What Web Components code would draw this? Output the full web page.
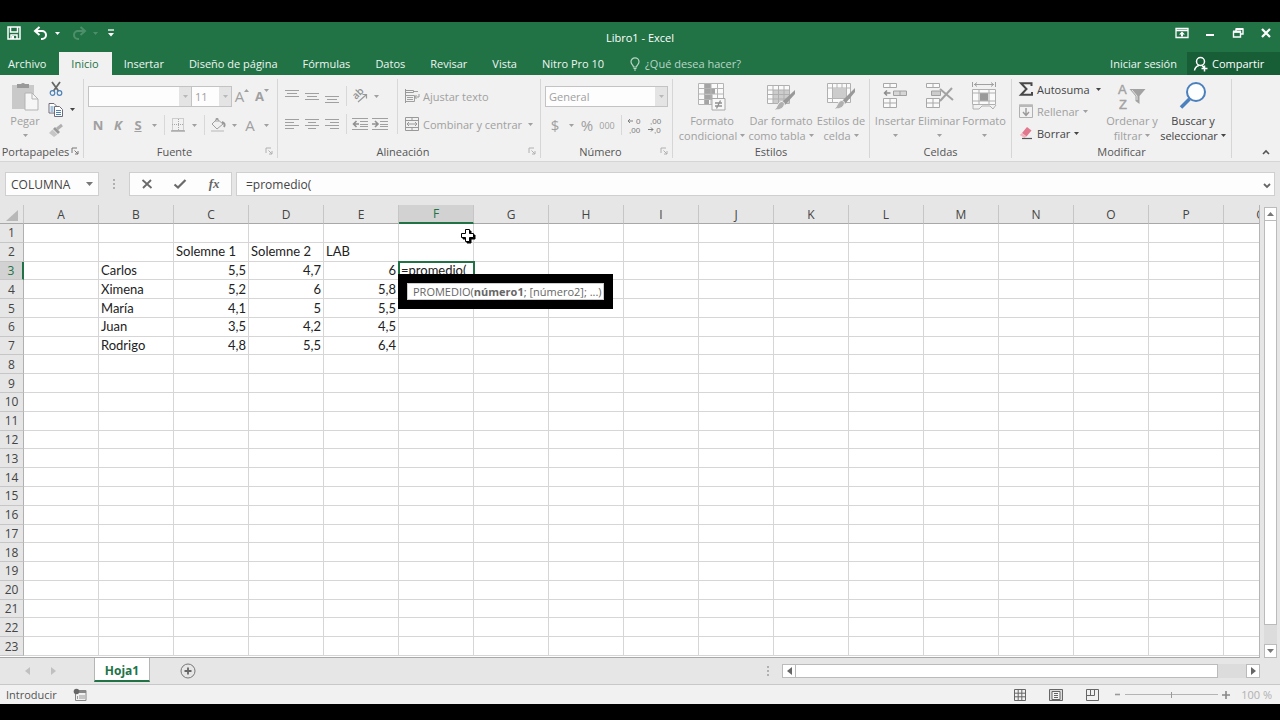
<!DOCTYPE html>
<html lang="es">
<head>
<meta charset="utf-8">
<meta name="viewport" content="width=device-width, initial-scale=1">
<title>Libro1 - Excel</title>
<style>
  html, body { margin: 0; height: 100%; background: #000; }
  body { font: 11px/15px "Open Sans", "Noto Sans", sans-serif; color: #444; }
</style>
</head>
<body>
<xl-app></xl-app>

<script>
const ICONS = {
  save: [14, 14, '<path d="M1 1h12v12H1z M3.500 1v5h7V1 M4 13V9h6v4" fill="none" stroke="#fff" stroke-width="1.500"/><path d="M5 10h2v3H5z" fill="#fff"/>'],
  undo: [16, 14, '<path d="M2.500 5H9a4 4 0 0 1 0 8H8" fill="none" stroke="#fff" stroke-width="2"/><path d="M6.500 1L2 5l4.500 4" fill="none" stroke="#fff" stroke-width="2"/>'],
  redo: [16, 14, '<path d="M13.500 5H7a4 4 0 0 0 0 8H8" fill="none" stroke="#4d8f6a" stroke-width="2"/><path d="M9.500 1L14 5l-4.500 4" fill="none" stroke="#4d8f6a" stroke-width="2"/>'],
  customize: [8, 8, '<path d="M1 1h6" stroke="#fff" stroke-width="1.300"/><path d="M1 4h6L4 7.500z" fill="#fff"/>'],
  ribbonOpts: [14, 12, '<path d="M1 1.500h12v9H1z M1 3.500h12" fill="none" stroke="#fff" stroke-width="1.300"/><path d="M7 4.500L10 7.500H8V9.500H6V7.500H4z" fill="#fff"/>'],
  minimize: [14, 12, '<path d="M3 7h8v2H3z" fill="#fff"/>'],
  restore: [14, 12, '<path d="M5 4V2h7v5h-2 M2.500 5h7v5h-7z" fill="none" stroke="#fff" stroke-width="1.400"/><path d="M2 4.500h8 M5 2h7" stroke="#fff" stroke-width="2"/>'],
  close: [14, 12, '<path d="M3 2l8 8 M11 2l-8 8" stroke="#fff" stroke-width="2.200"/>'],
  bulb: [12, 14, '<path d="M4.500 10C4.500 8 2 7.500 2 4.800a4 4 0 0 1 8 0C10 7.500 7.500 8 7.500 10z M4.500 11.500h3 M5 13h2" fill="none" stroke="#b9d6c6" stroke-width="1.200"/>'],
  share: [16, 16, '<circle cx="7.500" cy="5.500" r="4" fill="none" stroke="#fff" stroke-width="1.500"/><path d="M1.500 14.500C2 11.500 4 10 6 9.500 M9 9.500l2 2 M11.500 9.500v6 M8.500 12.500h6" fill="none" stroke="#fff" stroke-width="1.500"/>'],
  caret: [5, 3, '<path d="M0 0h5L2.500 3z" fill="currentColor"/>'],
  markUp: [5, 14, '<path d="M0 3h5L2.500 0z" fill="currentColor"/>'],
  markDown: [5, 14, '<path d="M0 0h5L2.500 3z" fill="currentColor"/>'],
  launcher: [8, 8, '<path d="M1 6V1h5" fill="none" stroke="currentColor"/><path d="M3.500 3.500L7 7 M7 4v3H4" fill="none" stroke="currentColor"/>'],
  chevUp: [8, 6, '<path d="M1 5l3-3 3 3" fill="none" stroke="#555" stroke-width="1.600"/>'],
  chevDown: [8, 6, '<path d="M1 1l3 3 3-3" fill="none" stroke="#666" stroke-width="1.800"/>'],
  paste: [28, 30, '<path d="M1 4h22v24H1z" fill="#c9c9c9"/><path d="M6 3h4a2.500 2.500 0 0 1 4 0h4v4H6z" fill="#999"/><path d="M14 12h7l6 6v11H14z" fill="#f6f6f6" stroke="#b3b3b3"/><path d="M21 12v6h6" fill="none" stroke="#b3b3b3"/>'],
  cut: [14, 14, '<path d="M3 0l6.500 9 M11 0L4.500 9" stroke="#666" stroke-width="1.800"/><circle cx="3.500" cy="11" r="2.300" fill="none" stroke="#4c82b8" stroke-width="1.200"/><circle cx="10.500" cy="11" r="2.300" fill="none" stroke="#4c82b8" stroke-width="1.200"/>'],
  copy: [16, 14, '<path d="M1 .500h5l2 2V10H1z" fill="#fff" stroke="#6c6c78"/><path d="M2.500 4h3 M2.500 6h3 M2.500 8h3" stroke="#4c82b8"/><path d="M6.500 3.500h5l3 3v7h-8z" fill="#fff" stroke="#6c6c78"/><path d="M8 7.500h5 M8 9.500h5 M8 11.500h5" stroke="#4c82b8"/>'],
  brush: [16, 14, '<path d="M14 1l-5 4" stroke="#b0b0b0" stroke-width="3"/><path d="M7 3l5 5-2 2-5-5z" fill="#999"/><path d="M4.500 5.500l5 5L6 13 1 9z" fill="#c6c6c6"/>'],
  borders: [14, 14, '<path d="M1.500 .500h11v12h-11z M7.500 1v12 M1 6.500h12" fill="none" stroke="#a8a8a8" stroke-dasharray="1 1"/><path d="M0 13h14" stroke="#9a9a9a" stroke-width="1.200"/>'],
  fill: [16, 16, '<path d="M7 2l6 5-6 5-5-5z M6 5V1.500h2V5" fill="none" stroke="#a0a0a0"/><path d="M12 5c3 1 3 3 2 5" fill="none" stroke="#999" stroke-width="2"/><path d="M1 13h13v2H1z" fill="#d4d4d4"/>'],
  alTop: [14, 14, '<path d="M0 1.500h14 M2 4.500h10 M0 7.500h14" stroke="#a0a0a0"/>'],
  alMid: [14, 14, '<path d="M0 4.500h14 M2 7.500h10 M0 10.500h14" stroke="#a0a0a0"/>'],
  alBot: [14, 14, '<path d="M0 7.500h14 M2 10.500h10 M0 13.500h14" stroke="#a0a0a0"/>'],
  alLeft: [14, 12, '<path d="M0 1.500h14 M0 4.500h9 M0 7.500h14 M0 10.500h9" stroke="#a0a0a0"/>'],
  alCenter: [14, 12, '<path d="M0 1.500h14 M3 4.500h8 M0 7.500h14 M3 10.500h8" stroke="#a0a0a0"/>'],
  alRight: [14, 12, '<path d="M0 1.500h14 M5 4.500h9 M0 7.500h14 M5 10.500h9" stroke="#a0a0a0"/>'],
  outdent: [16, 12, '<path d="M0 .500h16 M8 3.500h8 M8 6.500h8 M8 8.500h8 M0 11.500h16" stroke="#a0a0a0"/><path d="M7 6H2 M4.500 3L1.500 6l3 3" fill="none" stroke="#909090" stroke-width="1.600"/>'],
  indent: [16, 12, '<path d="M0 .500h16 M8 3.500h8 M8 6.500h8 M8 8.500h8 M0 11.500h16" stroke="#a0a0a0"/><path d="M0 6h5 M3 3l3 3-3 3" fill="none" stroke="#909090" stroke-width="1.600"/>'],
  orient: [16, 14, '<text x="0" y="0" transform="translate(4 11) rotate(-45)" font-family="Open Sans" font-weight="600" font-size="10" fill="#909090">ab</text><path d="M6 13l8-7 M10.500 5.500H14.500V9.500" fill="none" stroke="#999" stroke-width="1.200"/>'],
  wrap: [16, 14, '<path d="M1.500 0v14 M1.500 1.500h8v2h-8" fill="none" stroke="#999"/><path d="M1.500 6.500h9v6h-9 M3 8.500h6 M3 10.500h6 M10 2.500h4" fill="none" stroke="#a0a0a0"/><path d="M15 5v3h-4 M12.500 6l-2 2 2 2" fill="none" stroke="#999"/>'],
  merge: [14, 14, '<path d="M.500 .500h13v13H.500z M.500 3.500h13 M.500 10.500h13 M7 .500v3 M7 10.500v3" fill="none" stroke="#999"/><path d="M2 7h10 M4 5L2 7l2 2 M10 5l2 2-2 2" fill="none" stroke="#999"/>'],
  decMore: [14, 16, '<path d="M0 4h5 M2 2l-2 2 2 2" fill="none" stroke="#808080"/><text x="8" y="7" font-family="Liberation Sans" font-size="8" fill="#7c7c7c">0</text><text x="1" y="16" font-family="Liberation Sans" font-size="8" fill="#7c7c7c">,00</text>'],
  decLess: [14, 16, '<text x="2" y="7" font-family="Liberation Sans" font-size="8" fill="#7c7c7c">,00</text><path d="M0 12.500h5 M3 10.500l2 2-2 2" fill="none" stroke="#808080"/><text x="6" y="16" font-family="Liberation Sans" font-size="8" fill="#7c7c7c">,0</text>'],
  condFmt: [30, 30, '<path d="M1 2h26v22H1z" fill="#fafafa"/><path d="M7.500 2H14v5.500H7.500z M7.500 8H18v5H7.500z M7.500 13.500h8V18h-8z M7.500 18.500H12V24H7.500z" fill="#a4a4a4"/><path d="M1.500 2.500h25v21h-25z M7.500 2.500v21 M14 2.500v21 M20.500 2.500v21 M1.500 7.500h25 M1.500 13h25 M1.500 18.500h25" fill="none" stroke="#b4b4b4"/><path d="M15 17.500h13v11.500H15z" fill="#f8f8f8" stroke="#a8a8a8"/><path d="M18 22h7 M18 25h7 M23.500 19.500l-4 8" stroke="#909090" stroke-width="1.300" fill="none"/>'],
  table: [30, 30, '<path d="M1.500 4.500h22v18h-22z" fill="#fafafa"/><path d="M7 9h16v13H7z" fill="#ccc"/><path d="M1.500 4.500h22v18h-22z M7 4.500v18 M12.500 4.500v18 M18 4.500v18 M1.500 9h22 M1.500 13.500h22 M1.500 18h22" fill="none" stroke="#b0b0b0"/><path d="M29 9v4L19 24l-3-3z" fill="#999"/><path d="M15 20.500c3 0 4 2 3 4-1.500 4-6 4.500-10 4.500 3-1 3-7 7-8.500z" fill="#b0b0b0" stroke="#f1f1f1"/>'],
  cellStyle: [30, 30, '<path d="M1.500 2.500h23v19h-23z" fill="#fafafa" stroke="#b0b0b0"/><path d="M7 7.500h13v10H7z" fill="#ccc"/><path d="M6.500 2.500v19 M20.500 2.500v19 M1.500 7h23 M1.500 17.500h23 M11 2.500V7 M16 2.500V7" fill="none" stroke="#b4b4b4"/><path d="M29 7v4L19 23l-3-3z" fill="#999"/><path d="M15 19.500c3 0 4 2 3 4-1.500 4-6 4.500-10 4.500 3-1 3-7 7-8.500z" fill="#b0b0b0" stroke="#f1f1f1"/>'],
  insert: [26, 30, '<path d="M1.500 2.500h13v4h-13z M8 2.500v4 M1.500 17.500h13v9h-13z M8 17.500v9 M1.500 22h13" fill="#fafafa" stroke="#a8a8a8"/><path d="M11.500 10h13v4.500h-13z" fill="#d6d6d6" stroke="#a0a0a0"/><path d="M18 10v4.500" stroke="#a0a0a0"/><path d="M8.500 12H2.500 M5 9.500L2.500 12 5 14.500" fill="none" stroke="#8c8c8c" stroke-width="1.500"/>'],
  remove: [28, 30, '<path d="M1.500 2.500h13v4h-13z M8 2.500v4 M1.500 17.500h13v9h-13z M8 17.500v9 M1.500 22h13" fill="#fafafa" stroke="#a8a8a8"/><path d="M6.500 10h9v4.500h-9z" fill="#ccc" stroke="#a0a0a0"/><path d="M15 8l13 11 M27 7L15 20" stroke="#a2a2a2" stroke-width="2"/>'],
  format: [28, 30, '<path d="M2.500 1v5 M25.500 1v5 M4 3.500h20 M7 1.500L4.500 3.500 7 5.500 M21 1.500l2.500 2L21 5.500" fill="none" stroke="#a0a0a0"/><path d="M2.500 8.500h23v15h-23z" fill="#fafafa"/><path d="M10 12h8v8h-8z" fill="#999"/><path d="M2.500 8.500h23v15h-23z M9 8.500v15 M19 8.500v15 M2.500 12h23 M2.500 20h23" fill="none" stroke="#b0b0b0"/><path d="M3 24v4h6l3-3h8l3 3 3-4" fill="none" stroke="#b0b0b0"/>'],
  sigma: [14, 14, '<path d="M12.500 4V1.200H2L7.500 7 2 12.800h11V10" fill="none" stroke="#484848" stroke-width="2"/>'],
  fillDown: [14, 14, '<path d="M.500 1h13v12.500H.500z" fill="none" stroke="#b0b0b0"/><path d="M0 .500h14v2.500H0z" fill="#b8b8b8"/><path d="M7 4v7 M4 8l3 3.500L10 8" fill="none" stroke="#999" stroke-width="1.400"/>'],
  erase: [14, 14, '<path d="M8 1l4.500 3.500-5 6L3 7z" fill="#e2788d"/><path d="M3 7l4.500 3.500L5.500 12 .800 9z" fill="#f2b3bf"/><path d="M3 12.500h10" stroke="#555" stroke-width="1.200"/>'],
  sort: [28, 30, '<text x="0" y="13" font-family="Liberation Sans" font-size="13" fill="#a2a2a2" stroke="#a2a2a2" stroke-width=".4">A</text><text x="1" y="28" font-family="Liberation Sans" font-size="13" fill="#a2a2a2" stroke="#a2a2a2" stroke-width=".4">Z</text><path d="M11.500 8h16l-6 7v8l-4-3v-5z" fill="#a2a2a2"/><path d="M14 9l5 6v4" fill="none" stroke="#e4e4e4"/>'],
  find: [28, 30, '<circle cx="17" cy="11" r="9" fill="#fdfeff" stroke="#4a80bd" stroke-width="2"/><path d="M10.500 18L2 26.500" stroke="#4a80bd" stroke-width="3.500"/>'],
  cancel: [12, 10, '<path d="M1.500 1l9 8 M10 1L2 9" stroke="#6a6a6a" stroke-width="1.800"/>'],
  ok: [14, 10, '<path d="M1.500 5.500l3.500 3L12.500 1" fill="none" stroke="#6a6a6a" stroke-width="2.200"/>'],
  left: [5, 8, '<path d="M5 0v8L0 4z" fill="currentColor"/>'],
  right: [5, 8, '<path d="M0 0v8l5-4z" fill="currentColor"/>'],
  up: [7, 4, '<path d="M0 4h7L3.500 0z" fill="currentColor"/>'],
  down: [7, 4, '<path d="M0 0h7L3.500 4z" fill="currentColor"/>'],
  plusRound: [16, 16, '<circle cx="8" cy="8" r="7" fill="none" stroke="#777"/><path d="M8 4.500v7 M4.500 8h7" stroke="#666" stroke-width="1.800"/>'],
  macro: [14, 14, '<path d="M6 2.500h7v10H2.500V6" fill="none" stroke="#888"/><path d="M6 2h7v3H6z" fill="#888"/><circle cx="3.500" cy="3.500" r="2.800" fill="#666"/><path d="M4.500 8v3 M7 7v4 M9 7v4 M11 7v4" stroke="#999"/>'],
  vNormal: [12, 12, '<path d="M.500 .500h11v11H.500z M4.200 0v12 M7.800 0v12 M0 4.200h12 M0 7.800h12" fill="none" stroke="#666"/>'],
  vPage: [14, 12, '<path d="M.500 .500h13v11H.500z" fill="#ddd" stroke="#666"/><path d="M3 2.500h8v8H3z" fill="#f5f5f5" stroke="#666"/><path d="M5 4.500h4 M5 6.500h4 M5 8.500h4" stroke="#666"/>'],
  vBreak: [13, 12, '<path d="M.500 .500h12v11H.500z M4.500 .500v6 M8.500 .500v6h-8" fill="none" stroke="#666"/>'],
  minus: [7, 7, '<path d="M1 3.500h5" stroke="#999" stroke-width="1.600"/>'],
  plus: [8, 8, '<path d="M0 4h8 M4 0v8" stroke="#888" stroke-width="1.600"/>'],
  corner: [12, 11, '<path d="M12 0v11H0z" fill="#b8b8b8"/>'],
  cross: [16, 16, '<path d="M6 2h4v4h4v4h-4v4H6v-4H2V6h4z" fill="#000" stroke="#000" stroke-width="1" transform="translate(1 1)"/><path d="M5.500 1.500h4v4h4v4h-4v4h-4v-4h-4v-4h4z" fill="#fff" stroke="#000"/>'],
  dots: [2, 10, '<path d="M0 0h2v2H0z M0 4h2v2H0z M0 8h2v2H0z" fill="#b0b0b0"/>']
};

class XlElement extends HTMLElement {
  connectedCallback() {
    if (this.shadowRoot) return;
    this.attachShadow({ mode: 'open' }).innerHTML =
      `<style>*{box-sizing:border-box} button{font:inherit;color:inherit;background:none;border:0;padding:0;margin:0}
       ${this.styles()}</style>${this.markup()}`;
  }
  styles() { return ''; }
  markup() { return ''; }
}
const icon = name => `<xl-icon name="${name}"></xl-icon>`;

customElements.define('xl-icon', class extends XlElement {
  styles() { return ':host{display:inline-flex;flex:none} svg{display:block;overflow:visible}'; }
  markup() {
    const [w, h, body] = ICONS[this.getAttribute('name')];
    return `<svg width="${w}" height="${h}" viewBox="0 0 ${w} ${h}" aria-hidden="true">${body}</svg>`;
  }
});

/* Small ribbon button: icon or glyph in the slot, optional text and caret. */
customElements.define('xl-tool', class extends XlElement {
  styles() { return `
    :host{display:flex;color:#a0a0a0}
    :host([active]){color:#444}
    button{display:flex;align-items:center;height:var(--tool-h,20px)}
    .face{display:flex;justify-content:center;align-items:center;width:20px;white-space:nowrap}
    .caret{display:flex;justify-content:center;width:12px}
    .text{white-space:nowrap;padding-left:1px}
    :host([spread]),:host([spread]) button{flex:1}
    :host([spread]) .text{flex:1;text-align:left}`; }
  markup() {
    const text = this.getAttribute('text');
    return `<button type="button" aria-label="${text || this.getAttribute('label')}">
      <span class="face"><slot></slot></span>${text ? `<span class="text">${text}</span>` : ''}
      ${this.hasAttribute('menu') ? `<span class="caret">${icon('caret')}</span>` : ''}</button>`;
  }
});

/* Large ribbon button: picture above one or two lines of text. */
customElements.define('xl-big', class extends XlElement {
  styles() { return `
    :host{display:block;flex:none;color:#a0a0a0}
    :host([active]){color:#444}
    button{display:flex;flex-direction:column;align-items:center;width:100%;white-space:nowrap}
    .pic{display:flex;align-items:center;height:34px}
    .line{display:flex;align-items:center;justify-content:center;gap:3px;height:15px}`; }
  markup() {
    return `<button type="button"><span class="pic">${icon(this.getAttribute('icon'))}</span>
      <span class="line">${this.getAttribute('top')}</span>
      <span class="line">${this.getAttribute('bottom') || ''}${icon('caret')}</span></button>`;
  }
});

customElements.define('xl-combo', class extends XlElement {
  styles() { return `
    :host{display:grid;height:21px;border:1px solid #c3c3c3;background:#fdfdfd;color:#a0a0a0}
    select{grid-area:1/1;width:100%;min-width:0;appearance:none;border:0;background:none;font:inherit;color:inherit;opacity:1;padding:0 0 0 3px;margin:0}
    span{grid-area:1/1;justify-self:end;width:12px;display:flex;align-items:center;justify-content:center;background:#e4e4e4;color:#b8b8b8;pointer-events:none}`; }
  markup() {
    return `<select disabled aria-label="${this.getAttribute('label')}"><option>${this.getAttribute('value')}</option></select><span>${icon('caret')}</span>`;
  }
});

customElements.define('xl-sep', class extends XlElement {
  styles() { return ':host{display:flex;justify-content:center;width:8px;height:20px} i{width:1px;background:#d8d8d8}'; }
  markup() { return '<i></i>'; }
});

/* A captioned ribbon section. */
customElements.define('xl-group', class extends XlElement {
  styles() { return `
    :host{display:flex;flex-direction:column;border-right:1px solid #d6d6d6;min-width:0}
    .body{flex:1;display:flex;align-items:flex-start;padding:0 4px}
    .cap{display:flex;align-items:center;height:14px;color:#555}
    .cap span{flex:1;text-align:center}
    .cap button{display:flex;width:12px;color:var(--launcher,#b0b0b0)}`; }
  markup() {
    return `<div class="body"><slot></slot></div>
      <div class="cap"><span>${this.getAttribute('caption')}</span>
      ${this.hasAttribute('launcher') ? `<button type="button" aria-label="Opciones de ${this.getAttribute('caption')}">${icon('launcher')}</button>` : ''}</div>`;
  }
});

customElements.define('xl-titlebar', class extends XlElement {
  styles() { return `
    :host{display:grid;grid-template-columns:1fr auto 1fr;height:30px;color:#fff;background:#217346}
    .quick,.win{display:flex;align-items:center;height:22px}
    .quick{padding-left:4px}
    .quick button,.win button{display:flex;justify-content:center;align-items:center;height:22px}
    .quick button{width:20px}
    .quick .menu{width:12px;margin-right:6px}
    .quick .first{margin-right:7px}
    .quick .off{color:#4d8f6a}
    .quick .off.menu{margin-right:0}
    h1{font:inherit;margin:0;line-height:32px}
    .win{justify-content:flex-end}
    .win button{width:28px}`; }
  markup() { return `
    <div class="quick">
      <button class="first" type="button" aria-label="Guardar">${icon('save')}</button>
      <button type="button" aria-label="Deshacer">${icon('undo')}</button>
      <button type="button" class="menu" aria-label="Historial de deshacer">${icon('caret')}</button>
      <button type="button" aria-label="Rehacer">${icon('redo')}</button>
      <button type="button" class="off menu" aria-label="Historial de rehacer">${icon('caret')}</button>
      <button type="button" aria-label="Personalizar">${icon('customize')}</button>
    </div>
    <h1>Libro1 - Excel</h1>
    <div class="win">
      <button type="button" aria-label="Opciones de la cinta">${icon('ribbonOpts')}</button>
      <button type="button" aria-label="Minimizar">${icon('minimize')}</button>
      <button type="button" aria-label="Restaurar">${icon('restore')}</button>
      <button type="button" aria-label="Cerrar">${icon('close')}</button>
    </div>`; }
});

customElements.define('xl-tabs', class extends XlElement {
  styles() { return `
    :host{display:flex;height:23px;color:#eef6f1;background:#217346;white-space:nowrap}
    nav{display:flex}
    a{color:inherit;text-decoration:none;padding:0 13px 0 12px;line-height:23px}
    a.file{padding-left:8px}
    a.on{background:#f1f1f1;color:#217346}
    .tell{display:flex;align-items:center;gap:4px;padding-left:12px;color:#b9d6c6}
    .right{margin-left:auto;display:flex}
    a.login{padding:0 10px}
    .share{display:flex;align-items:center;gap:3px;width:93px;padding-left:6px;background:#175d36;color:#fff}`; }
  markup() {
    const tabs = ['Inicio', 'Insertar', 'Diseño de página', 'Fórmulas', 'Datos', 'Revisar', 'Vista', 'Nitro Pro 10'];
    return `<nav><a class="file" href="#archivo">Archivo</a>${tabs.map((t, i) => `<a href="#tab${i}"${i ? '' : ' class="on"'}>${t}</a>`).join('')}</nav>
      <button class="tell" type="button">${icon('bulb')}<span>¿Qué desea hacer?</span></button>
      <div class="right"><a class="login" href="#sesion">Iniciar sesión</a>
      <button class="share" type="button">${icon('share')}<span>Compartir</span></button></div>`;
  }
});

customElements.define('xl-ribbon', class extends XlElement {
  styles() { return `
    :host{display:grid;grid-template-columns:84px 194px 263px 132px 197px 142px 220px 1fr;
      height:87px;padding:4px 0 6px;background:#f1f1f1;border-bottom:1px solid #d5d5d5}
    .stack{display:flex;flex-direction:column;--tool-h:21px;margin-top:-1px}
    .rows{display:flex;flex-direction:column;gap:8px;padding-top:7px;flex:1}
    .row{display:flex}
    .clip{width:42px}
    .fam{width:104px}.size{flex:none;width:41px;margin-left:-1px}
    .edge{border-left:1px solid #d8d8d8;padding-left:4px}
    .align{flex:none;width:115px}
    b,i,u,s{font-size:13px;text-decoration:none}
    b,i,u{font-weight:700}
    u{text-decoration:underline}
    s{font-size:15px}
    small{font-size:9px}
    em{font-size:15px;font-style:normal}
    .w70{width:70px}.w68{width:68px}.w52{width:52px}.w46{width:46px}.w44{width:44px}.w42{width:42px}.w56{width:56px}.w66{width:66px}
    .edit{width:88px;--tool-h:22px}
    .edit xl-tool{flex:none}
    .end{display:flex;justify-content:flex-end;align-items:flex-end;padding:0 10px 0 0}`; }
  markup() { return `
    <xl-group caption="Portapapeles" launcher style="--launcher:#777">
      <xl-big class="clip" icon="paste" top="Pegar"></xl-big>
      <div class="stack">
        <xl-tool label="Cortar">${icon('cut')}</xl-tool>
        <xl-tool label="Copiar" menu active>${icon('copy')}</xl-tool>
        <xl-tool label="Copiar formato">${icon('brush')}</xl-tool>
      </div>
    </xl-group>
    <xl-group caption="Fuente" launcher>
      <div class="rows">
        <div class="row">
          <xl-combo class="fam" label="Fuente" value=""></xl-combo>
          <xl-combo class="size" label="Tamaño de fuente" value="11"></xl-combo>
          <xl-tool label="Aumentar tamaño"><s>A</s>${icon('markUp')}</xl-tool>
          <xl-tool label="Disminuir tamaño"><b>A</b>${icon('markDown')}</xl-tool>
        </div>
        <div class="row">
          <xl-tool label="Negrita"><b>N</b></xl-tool><xl-tool label="Cursiva"><i>K</i></xl-tool>
          <xl-tool label="Subrayado" menu><u>S</u></xl-tool><xl-sep></xl-sep>
          <xl-tool label="Bordes" menu>${icon('borders')}</xl-tool><xl-sep></xl-sep>
          <xl-tool label="Color de relleno" menu>${icon('fill')}</xl-tool>
          <xl-tool label="Color de fuente" menu><s>A</s></xl-tool>
        </div>
      </div>
    </xl-group>
    <xl-group caption="Alineación" launcher>
      <div class="rows align">
        <div class="row">
          <xl-tool label="Alinear arriba">${icon('alTop')}</xl-tool><xl-tool label="Alinear en el medio">${icon('alMid')}</xl-tool>
          <xl-tool label="Alinear abajo">${icon('alBot')}</xl-tool><xl-sep></xl-sep>
          <xl-tool label="Orientación" menu>${icon('orient')}</xl-tool>
        </div>
        <div class="row">
          <xl-tool label="Alinear a la izquierda">${icon('alLeft')}</xl-tool><xl-tool label="Centrar">${icon('alCenter')}</xl-tool>
          <xl-tool label="Alinear a la derecha">${icon('alRight')}</xl-tool><xl-sep></xl-sep>
          <xl-tool label="Disminuir sangría">${icon('outdent')}</xl-tool><xl-tool label="Aumentar sangría">${icon('indent')}</xl-tool>
        </div>
      </div>
      <div class="rows edge">
        <div class="row"><xl-tool text="Ajustar texto">${icon('wrap')}</xl-tool></div>
        <div class="row"><xl-tool text="Combinar y centrar" menu spread>${icon('merge')}</xl-tool></div>
      </div>
    </xl-group>
    <xl-group caption="Número" launcher>
      <div class="rows">
        <xl-combo label="Formato de número" value="General"></xl-combo>
        <div class="row">
          <xl-tool label="Moneda" menu><em>$</em></xl-tool><xl-tool label="Porcentaje"><em>%</em></xl-tool>
          <xl-tool label="Millares"><small>000</small></xl-tool><xl-sep></xl-sep>
          <xl-tool label="Aumentar decimales">${icon('decMore')}</xl-tool><xl-tool label="Disminuir decimales">${icon('decLess')}</xl-tool>
        </div>
      </div>
    </xl-group>
    <xl-group caption="Estilos">
      <xl-big class="w70" icon="condFmt" top="Formato" bottom="condicional"></xl-big>
      <xl-big class="w68" icon="table" top="Dar formato" bottom="como tabla"></xl-big>
      <xl-big class="w52" icon="cellStyle" top="Estilos de" bottom="celda"></xl-big>
    </xl-group>
    <xl-group caption="Celdas">
      <xl-big class="w42" icon="insert" top="Insertar"></xl-big>
      <xl-big class="w46" icon="remove" top="Eliminar"></xl-big>
      <xl-big class="w44" icon="format" top="Formato"></xl-big>
    </xl-group>
    <xl-group caption="Modificar">
      <div class="stack edit">
        <xl-tool text="Autosuma" menu active spread>${icon('sigma')}</xl-tool>
        <xl-tool text="Rellenar" menu>${icon('fillDown')}</xl-tool>
        <xl-tool text="Borrar" menu active>${icon('erase')}</xl-tool>
      </div>
      <xl-big class="w56" icon="sort" top="Ordenar y" bottom="filtrar"></xl-big>
      <xl-big class="w66" icon="find" top="Buscar y" bottom="seleccionar" active></xl-big>
    </xl-group>
    <div class="end"><button type="button" aria-label="Contraer la cinta">${icon('chevUp')}</button></div>`; }
});

customElements.define('xl-formula-bar', class extends XlElement {
  styles() { return `
    :host{display:flex;gap:4px;padding:10px 5px 9px;background:#e6e6e6;font-size:12px;color:#444}
    .box{display:flex;align-items:center;height:24px;border:1px solid #cfcfcf;background:#fdfdfd}
    input{border:0;background:none;font:inherit;color:inherit;padding:0;flex:1;min-width:0;outline:0}
    .name{width:94px;padding:0 5px}
    .name button{display:flex;color:#777}
    .grip{display:flex;align-items:center;justify-content:center;width:22px}
    .acts{width:103px;justify-content:space-around}
    .acts button{display:flex;justify-content:center;width:30px}
    .acts .fx{color:#666;font:italic 700 13px/16px "Liberation Serif",serif}
    .formula{flex:1;padding:0 3px 0 9px}`; }
  markup() { return `
    <div class="box name"><input aria-label="Cuadro de nombres" value="COLUMNA"><button type="button" aria-label="Nombres">${icon('down')}</button></div>
    <span class="grip">${icon('dots')}</span>
    <div class="box acts"><button type="button" aria-label="Cancelar">${icon('cancel')}</button><button type="button" aria-label="Introducir">${icon('ok')}</button><button type="button" class="fx">fx</button></div>
    <div class="box formula"><input aria-label="Barra de fórmulas" value="=promedio("><button type="button" aria-label="Expandir">${icon('chevDown')}</button></div>`; }
});

/* Argument hint shown under the cell that is being edited. */
customElements.define('xl-hint', class extends XlElement {
  styles() { return `
    :host{display:block;border:9px solid #000;background:#fff;color:#666;font:11px/15px "Open Sans",sans-serif;white-space:nowrap}
    div{border:1px solid #ccc;padding:0 1px 0 5px;text-align:left}`; }
  markup() { return '<div role="tooltip"><slot></slot></div>'; }
});

customElements.define('xl-sheet', class extends XlElement {
  styles() { return `
    :host{display:flex;flex:1;min-height:0;background:#e6e6e6}
    .view{flex:1;min-width:0;overflow:hidden;display:flex;flex-direction:column;background:#fff;border-right:1px solid #b5b5b5;border-bottom:1px solid #a8a8a8;padding-bottom:1px}
    table{flex:1;table-layout:fixed;width:1299px;height:100%;border-collapse:separate;border-spacing:0;font:13px/15px Lato,sans-serif;color:#222}
    th,td{padding:0 2px;border:solid #d6d6d6;border-width:0 1px 1px 0;white-space:nowrap;text-align:left;vertical-align:middle}
    th{padding:0;background:#e6e6e6;font:12px/15px "Open Sans",sans-serif;color:#444;text-align:center;border-color:#c6c6c6}
    thead th{height:19px;border-bottom-color:#a8a8a8}
    thead th:first-child{width:24px}
    thead xl-icon{vertical-align:middle}
    tbody th{border-right-color:#b0b0b0}
    th.on{background:#d2d2d2;color:#217346}
    thead th.on{border-bottom:2px solid #217346}
    tbody th.on{border-right:2px solid #217346}
    td.num{text-align:right}
    td.anchor{position:relative}
    td.edit{outline:2px solid #217346;outline-offset:-1px;z-index:1}
    td input{display:block;width:100%;height:15px;border:0;outline:0;background:none;padding:0;font:inherit;color:inherit}
    xl-hint{position:absolute;left:-1px;top:12px}
    .pointer{position:absolute;right:-3px;top:4px}
    .bar{display:flex;flex-direction:column;width:13px;margin:2px 3px 0 4px;background:#dcdcdc}
    .bar button{display:flex;align-items:center;justify-content:center;height:14px;background:#fff;border:1px solid #bbb;color:#777}
    .thumb{flex:1;background:#fff;border:1px solid #bbb;border-top:0;margin-bottom:19px}`; }
  markup() {
    const cols = 'ABCDEFGHIJKLMNOPQ'.split('');
    const data = {
      2: { C: 'Solemne 1', D: 'Solemne 2', E: 'LAB' },
      3: { B: 'Carlos', C: '5,5', D: '4,7', E: '6' },
      4: { B: 'Ximena', C: '5,2', D: '6', E: '5,8' },
      5: { B: 'María', C: '4,1', D: '5', E: '5,5' },
      6: { B: 'Juan', C: '3,5', D: '4,2', E: '4,5' },
      7: { B: 'Rodrigo', C: '4,8', D: '5,5', E: '6,4' }
    };
    const cell = (r, c) => {
      if (r === 1 && c === 'F') return `<td class="anchor"><xl-icon class="pointer" name="cross"></xl-icon></td>`;
      if (r === 3 && c === 'F') return `<td class="anchor edit"><input aria-label="F3" value="=promedio("><xl-hint>PROMEDIO(<b>número1</b>; [número2]; ...)</xl-hint></td>`;
      const v = (data[r] || {})[c] || '';
      return `<td${/^\d/.test(v) ? ' class="num"' : ''}>${v}</td>`;
    };
    let rows = '';
    for (let r = 1; r <= 23; r++)
      rows += `<tr><th scope="row"${r === 3 ? ' class="on"' : ''}>${r}</th>${cols.map(c => cell(r, c)).join('')}</tr>`;
    return `<div class="view"><table>
      <thead><tr><th>${icon('corner')}</th>${cols.map(c => `<th scope="col"${c === 'F' ? ' class="on"' : ''}>${c}</th>`).join('')}</tr></thead>
      <tbody>${rows}</tbody></table></div>
      <div class="bar"><button type="button" aria-label="Subir">${icon('up')}</button><div class="thumb"></div><button type="button" aria-label="Bajar">${icon('down')}</button></div>`;
  }
});

customElements.define('xl-sheet-tabs', class extends XlElement {
  styles() { return `
    :host{display:flex;height:26px;background:#e6e6e6}
    .nav{display:flex;align-items:center;justify-content:space-around;width:94px;padding:0 28px 0 14px;color:#c0c0c0}
    .nav button,.add{display:flex;align-items:center;justify-content:center}
    a{height:24px;width:56px;text-align:center;background:#fff;border:1px solid #b5b5b5;border-top:0;border-bottom:2px solid #217346;color:#217346;font:700 12px/25px "Open Sans",sans-serif;text-decoration:none}
    .add{margin-left:30px}
    .grip{display:flex;align-items:center;margin-left:auto;color:#aaa}
    .bar{display:flex;align-self:center;height:14px;width:478px;margin:0 20px 0 13px;background:#dcdcdc}
    .bar button{display:flex;align-items:center;justify-content:center;width:14px;background:#fff;border:1px solid #bbb;color:#666}
    .thumb{flex:1;background:#fff;border:1px solid #bbb;border-left:0;margin-right:28px}`; }
  markup() { return `
    <div class="nav"><button type="button" aria-label="Anterior">${icon('left')}</button><button type="button" aria-label="Siguiente">${icon('right')}</button></div>
    <a href="#hoja1">Hoja1</a>
    <button class="add" type="button" aria-label="Hoja nueva">${icon('plusRound')}</button>
    <span class="grip">${icon('dots')}</span>
    <div class="bar"><button type="button" aria-label="Izquierda">${icon('left')}</button><div class="thumb"></div><button type="button" aria-label="Derecha">${icon('right')}</button></div>`; }
});

customElements.define('xl-status', class extends XlElement {
  styles() { return `
    :host{display:flex;align-items:center;height:20px;padding:0 8px 0 6px;background:#f1f1f1;border-top:1px solid #c8c8c8;color:#555}
    button{display:flex}
    .macro{margin-left:16px}
    .views{display:flex;gap:23px;margin-left:auto}
    .zoom{display:flex;align-items:center;gap:4px;margin-left:15px}
    input{appearance:none;width:93px;height:8px;margin:0;background:linear-gradient(#b4b4b4,#b4b4b4) center/100% 1px no-repeat}
    input::-webkit-slider-thumb{appearance:none;width:1px;height:6px;background:#999}
    .pct{margin-left:11px;color:#b0b0b0}`; }
  markup() { return `
    <span>Introducir</span><button class="macro" type="button" aria-label="Grabar macro">${icon('macro')}</button>
    <div class="views"><button type="button" aria-label="Normal">${icon('vNormal')}</button><button type="button" aria-label="Diseño de página">${icon('vPage')}</button><button type="button" aria-label="Saltos de página">${icon('vBreak')}</button></div>
    <div class="zoom"><button type="button" aria-label="Alejar">${icon('minus')}</button><input type="range" aria-label="Zoom" min="0" max="200" value="100"><button type="button" aria-label="Acercar">${icon('plus')}</button></div>
    <span class="pct">100 %</span>`; }
});

customElements.define('xl-app', class extends XlElement {
  styles() { return ':host{display:flex;flex-direction:column;box-sizing:border-box;height:100vh;padding:22px 0 16px;overflow:hidden}'; }
  markup() { return '<xl-titlebar></xl-titlebar><xl-tabs></xl-tabs><xl-ribbon></xl-ribbon><xl-formula-bar></xl-formula-bar><xl-sheet></xl-sheet><xl-sheet-tabs></xl-sheet-tabs><xl-status></xl-status>'; }
});
</script>
</body>
</html>
